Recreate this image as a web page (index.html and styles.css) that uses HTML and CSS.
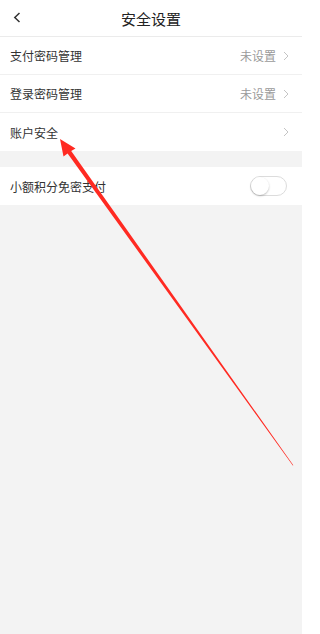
FILE: index.html
```html
<!DOCTYPE html>
<html lang="zh-CN">
<head>
<meta charset="utf-8">
<title>安全设置</title>
<link rel="stylesheet" href="styles.css">
</head>
<body>
<div class="app">
  <header class="header">
    <span class="back">
      <svg width="8" height="11" viewBox="0 0 8 11"><path d="M6.5 1 L1.8 5.5 L6.5 10" fill="none" stroke="#333" stroke-width="1.5"/></svg>
    </span>
    <h1 class="title">安全设置</h1>
  </header>
  <section class="group">
    <div class="row">
      <span class="label">支付密码管理</span>
      <span class="value">未设置</span>
      <svg class="chev" width="6" height="10" viewBox="0 0 6 10"><path d="M1 1 L5 5 L1 9" fill="none" stroke="#c4c4c4" stroke-width="1"/></svg>
    </div>
    <div class="row">
      <span class="label">登录密码管理</span>
      <span class="value">未设置</span>
      <svg class="chev" width="6" height="10" viewBox="0 0 6 10"><path d="M1 1 L5 5 L1 9" fill="none" stroke="#c4c4c4" stroke-width="1"/></svg>
    </div>
    <div class="row last">
      <span class="label">账户安全</span>
      <svg class="chev" width="6" height="10" viewBox="0 0 6 10"><path d="M1 1 L5 5 L1 9" fill="none" stroke="#c4c4c4" stroke-width="1"/></svg>
    </div>
  </section>
  <section class="group second">
    <div class="row last">
      <span class="label">小额积分免密支付</span>
      <span class="toggle"><span class="knob"></span></span>
    </div>
  </section>
  <svg class="arrow" width="302" height="634" viewBox="0 0 302 634">
    <polygon fill="#ff2a22" points="60,139 75.5,148.5 71.2,151 293.3,465.2 292.8,465.5 67.6,153.6 63.5,156.5"/>
  </svg>
</div>
</body>
</html>
```
FILE: styles.css
```css
html, body {
  margin: 0;
  padding: 0;
  background: #ffffff;
}
body {
  font-family: "Noto Sans CJK SC", "Noto Sans", sans-serif;
  color: #333333;
}
.app {
  position: relative;
  width: 302px;
  min-height: 634px;
  background: #f3f3f3;
  overflow: hidden;
}
.header {
  height: 36px;
  background: #ffffff;
  border-bottom: 1px solid #ebebeb;
  display: flex;
  align-items: center;
  justify-content: center;
  position: relative;
}
.back {
  position: absolute;
  left: 13px;
  top: 12px;
  display: flex;
}
.title {
  margin: 0;
  font-size: 15px;
  font-weight: normal;
  color: #222222;
  letter-spacing: 0;
}
.group {
  background: #ffffff;
}
.group.second {
  margin-top: 16px;
}
.row {
  height: 37px;
  border-bottom: 1px solid #f0f0f0;
  display: flex;
  align-items: center;
  padding: 0 13px 0 10px;
}
.row.last {
  border-bottom: none;
  height: 38px;
}
.label {
  flex: 1;
  font-size: 12px;
  color: #333333;
}
.value {
  font-size: 12px;
  color: #9a9a9a;
  margin-right: 7px;
}
.chev {
  display: block;
}
.toggle {
  width: 35px;
  height: 18px;
  border: 1px solid #dcdcdc;
  border-radius: 10px;
  background: #ffffff;
  position: relative;
  margin-right: 2px;
}
.knob {
  position: absolute;
  left: 0;
  top: 0;
  width: 18px;
  height: 18px;
  border-radius: 50%;
  background: #ffffff;
  box-shadow: 0 1px 2px rgba(0,0,0,0.25);
}
.arrow {
  position: absolute;
  left: 0;
  top: 0;
  pointer-events: none;
}
```
